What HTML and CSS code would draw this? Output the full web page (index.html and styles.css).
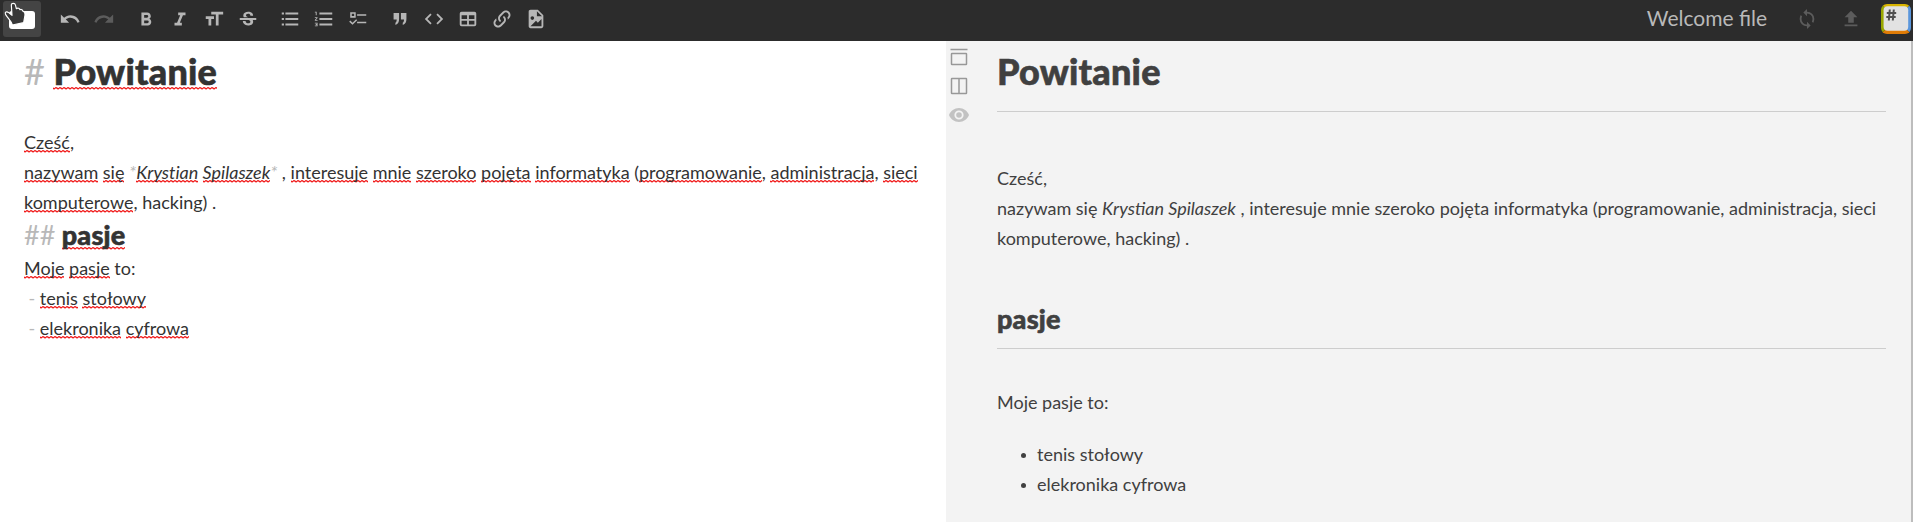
FILE: index.html
```html
<!DOCTYPE html>
<html lang="pl">
<head>
<meta charset="utf-8">
<title>Welcome file</title>
<link rel="stylesheet" href="styles.css">
</head>
<body>
<div class="app">
  <nav class="navbar">
    <div class="explorer">
      <span class="folder"></span>
      <svg class="pointer" width="28" height="28" viewBox="0 0 84 84"><path d="M34 14C34 9 45 9 46 14L49 26C54 23 58 25 60 29C64 27 68 30 69 34C74 34 75 39 75 45L71 68L37 75C34 62 24 56 17 44C13 36 20 33 26 38L36 46Z" fill="#383838" stroke="#fff" stroke-width="3.5" stroke-linejoin="round"/></svg>
    </div>
    <div class="tools">
      <div class="group">
        <svg class="icon" viewBox="0 0 24 24"><path d="M12.5,8C9.85,8 7.45,9 5.6,10.6L2,7V16H11L7.38,12.38C8.77,11.22 10.54,10.5 12.5,10.5C16.04,10.5 19.05,12.81 20.1,16L22.47,15.22C21.08,11.03 17.15,8 12.5,8Z"/></svg>
        <svg class="icon dim" viewBox="0 0 24 24"><path d="M18.4,10.6C16.55,9 14.15,8 11.5,8C6.85,8 2.92,11.03 1.54,15.22L3.9,16C4.95,12.81 7.95,10.5 11.5,10.5C13.45,10.5 15.23,11.22 16.62,12.38L13,16H22V7L18.4,10.6Z"/></svg>
      </div>
      <div class="group">
        <svg class="icon" viewBox="0 0 24 24"><path d="M13.5,15.5H10V12.5H13.5A1.5,1.5 0 0,1 15,14A1.5,1.5 0 0,1 13.5,15.5M10,6.5H13A1.5,1.5 0 0,1 14.5,8A1.5,1.5 0 0,1 13,9.5H10M15.6,10.79C16.57,10.11 17.25,9 17.25,8C17.25,5.74 15.5,4 13.25,4H7V18H14.04C16.14,18 17.75,16.3 17.75,14.21C17.75,12.69 16.89,11.39 15.6,10.79Z" transform="translate(0 1)"/></svg>
        <svg class="icon" viewBox="0 0 24 24"><path d="M10,4V7H12.21L8.79,15H6V18H14V15H11.79L15.21,7H18V4H10Z" transform="translate(0 1)"/></svg>
        <svg class="icon" viewBox="0 0 24 24"><path d="M3,12H6V19H9V12H12V9H3M9,4V7H14V19H17V7H22V4H9Z"/></svg>
        <svg class="icon" viewBox="0 0 24 24"><path d="M6.85,7.08C6.85,4.37,9.45,3,12.24,3c1.64,0,3,0.49,3.9,1.28c0.77,0.65,1.46,1.73,1.46,3.24h-3.01c0-0.31-0.05-0.59-0.15-0.85c-0.29-0.86-1.2-1.28-2.25-1.28c-1.86,0-2.34,1.02-2.34,1.7c0,0.48,0.25,0.88,0.74,1.21C10.97,8.55,11.36,8.78,12,9H7.39C7.18,8.66,6.85,8.11,6.85,7.08zM21,12v-2H3v2h9.62c1.15,0.45,1.96,0.75,1.96,1.97c0,1-0.81,1.67-2.28,1.67c-1.54,0-2.93-0.54-2.93-2.51H6.4c0,0.55,0.08,1.13,0.24,1.58c0.81,2.29,3.29,3.3,5.67,3.3c2.27,0,5.3-0.89,5.3-4.05c0-0.3-0.01-1.16-0.48-1.94H21z" transform="translate(0 1)"/></svg>
      </div>
      <div class="group">
        <svg class="icon" viewBox="0 0 24 24"><path d="M7,5H21V7H7V5M7,13V11H21V13H7M7,19V17H21V19H7M3,4.8H5.4V7.2H3ZM3,10.8H5.4V13.2H3ZM3,16.8H5.4V19.2H3Z"/></svg>
        <svg class="icon" viewBox="0 0 24 24"><path d="M7,13H21V11H7M7,19H21V17H7M7,7H21V5H7M2,11H3.8L2,13.1V14H5V13H3.2L5,10.9V10H2M3,8H4V4H2V5H3M2,17H4V17.5H3V18.5H4V19H2V20H5V16H2V17Z"/></svg>
        <svg class="icon" viewBox="0 0 24 24"><path d="M3.5,4.5H9.5V10.5H3.5ZM5.2,6.2V8.8H7.8V6.2ZM11,6.8H21V8.4H11ZM11,15H21V16.6H11ZM3.6,13.7L6,16L10,12.2L11.1,13.4L6,18.4L2.4,15Z" fill-rule="evenodd"/></svg>
      </div>
      <div class="group">
        <svg class="icon" viewBox="0 0 24 24"><path d="M5,5.5H11V12C11,15 10,17.5 7,18.5V16C8,15.3 8.4,14 8.4,12.5H5ZM13,5.5H19V12C19,15 18,17.5 15,18.5V16C16,15.3 16.4,14 16.4,12.5H13Z"/></svg>
        <svg class="icon" viewBox="0 0 24 24"><path d="M14.6,16.6L19.2,12L14.6,7.4L16,6L22,12L16,18L14.6,16.6M9.4,16.6L4.8,12L9.4,7.4L8,6L2,12L8,18L9.4,16.6Z"/></svg>
        <svg class="icon" viewBox="0 0 24 24"><path d="M5,4H19A2,2 0 0,1 21,6V18A2,2 0 0,1 19,20H5A2,2 0 0,1 3,18V6A2,2 0 0,1 5,4M5,8V12H11V8H5M13,8V12H19V8H13M5,14V18H11V14H5M13,14V18H19V14H13Z"/></svg>
        <svg class="icon" viewBox="0 0 24 24"><path d="M10.59,13.41C11,13.8 11,14.44 10.59,14.83C10.2,15.22 9.56,15.22 9.17,14.83C7.22,12.88 7.22,9.71 9.17,7.76V7.76L12.71,4.22C14.66,2.27 17.83,2.27 19.78,4.22C21.73,6.17 21.73,9.34 19.78,11.29L18.29,12.78C18.3,11.96 18.17,11.14 17.89,10.36L18.36,9.88C19.54,8.71 19.54,6.81 18.36,5.64C17.19,4.46 15.29,4.46 14.12,5.64L10.59,9.17C9.41,10.34 9.41,12.24 10.59,13.41M13.41,9.17C13.8,8.78 14.44,8.78 14.83,9.17C16.78,11.12 16.78,14.29 14.83,16.24V16.24L11.29,19.78C9.34,21.73 6.17,21.73 4.22,19.78C2.27,17.83 2.27,14.66 4.22,12.71L5.71,11.22C5.7,12.04 5.83,12.86 6.11,13.65L5.64,14.12C4.46,15.29 4.46,17.19 5.64,18.36C6.81,19.54 8.71,19.54 9.88,18.36L13.41,14.83C14.59,13.66 14.59,11.76 13.41,10.59C13,10.2 13,9.56 13.41,9.17Z"/></svg>
        <svg class="icon" viewBox="0 0 24 24"><path d="M13,9H18.5L13,3.5V9M6,2H14L20,8V20A2,2 0 0,1 18,22H6C4.89,22 4,21.1 4,20V4C4,2.89 4.89,2 6,2M6,20H15L18,20V12L14,16L12,14L6,20M8,9A2,2 0 0,0 6,11A2,2 0 0,0 8,13A2,2 0 0,0 10,11A2,2 0 0,0 8,9Z"/></svg>
      </div>
    </div>
    <div class="title">Welcome file</div>
    <div class="actions">
      <svg class="icon dim" viewBox="0 0 24 24"><path d="M12,18A6,6 0 0,1 6,12C6,11 6.25,10.03 6.7,9.2L5.24,7.74C4.46,8.97 4,10.43 4,12A8,8 0 0,0 12,20V23L16,19L12,15M12,4V1L8,5L12,9V6A6,6 0 0,1 18,12C18,13 17.75,13.97 17.3,14.8L18.76,16.26C19.54,15.03 20,13.57 20,12A8,8 0 0,0 12,4Z"/></svg>
      <svg class="icon dim" viewBox="0 0 24 24"><path d="M9,16V10H5L12,3L19,10H15V16H9M5,20V18H19V20H5Z"/></svg>
    </div>
    <svg class="logo" width="30" height="30" viewBox="0 0 30 30">
      <clipPath id="tile"><rect width="30" height="30" rx="6"/></clipPath>
      <g clip-path="url(#tile)">
        <path d="M0 0H30L15 15Z" fill="#d9b400"/>
        <path d="M30 0V30L15 15Z" fill="#5a96dc"/>
        <path d="M0 30H30L15 15Z" fill="#e07c06"/>
        <path d="M0 0V30L15 15Z" fill="#9aa800"/>
      </g>
      <rect x="2.6" y="2.2" width="24.6" height="24.6" rx="4" fill="#e2e2e2"/>
      <path d="M8.8 5.500L7.800 16.500M12.800 5.500L11.800 16.500M5.800 9H15.200M5.300 13H14.700" stroke="#505050" stroke-width="2" fill="none"/>
    </svg>
  </nav>
  <main class="panes">
    <section class="editor">
      <div class="ed-h1"><span class="mark">#</span> <span class="sp">Powitanie</span></div>
      <div class="blank"></div>
      <div><span class="sp">Cześć</span>,</div>
      <div><span class="sp">nazywam</span> <span class="sp">się</span> <em><span class="mark">*</span><span class="sp">Krystian</span> <span class="sp">Spilaszek</span><span class="mark">*</span></em> , <span class="sp">interesuje</span> <span class="sp">mnie</span> <span class="sp">szeroko</span> <span class="sp">pojęta</span> <span class="sp">informatyka</span> (<span class="sp">programowanie</span>, <span class="sp">administracja</span>, <span class="sp">sieci</span> <span class="sp">komputerowe</span>, hacking) .</div>
      <div class="ed-h2"><span class="mark">##</span> <span class="sp">pasje</span></div>
      <div><span class="sp">Moje</span> <span class="sp">pasje</span> to:</div>
      <div class="item"><span class="mark">-</span> <span class="sp">tenis</span> <span class="sp">stołowy</span></div>
      <div class="item"><span class="mark">-</span> <span class="sp">elekronika</span> <span class="sp">cyfrowa</span></div>
    </section>
    <aside class="side">
      <svg class="side-icon" viewBox="0 0 20 20"><path d="M1.500 1.500H18.500M3 5.500H17A.5.5 0 0 1 17.500 6V16A.5.5 0 0 1 17 16.500H3A.5.5 0 0 1 2.500 16V6A.5.5 0 0 1 3 5.500Z"/></svg>
      <svg class="side-icon" viewBox="0 0 20 20"><path d="M3 1.500H17A.5.5 0 0 1 17.500 2V16A.5.5 0 0 1 17 16.500H3A.5.5 0 0 1 2.500 16V2A.5.5 0 0 1 3 1.500ZM10 1.500V16.500"/></svg>
      <svg class="side-icon eye" viewBox="0 0 20 20"><path d="M0 9C1.500 5 5.400 2 10 2S18.500 5 20 9C18.500 13 14.600 16 10 16S1.500 13 0 9ZM10 4.400A4.600 4.600 0 1 0 10 13.600A4.600 4.600 0 1 0 10 4.400ZM10 6.200A2.800 2.800 0 1 1 10 11.800A2.800 2.800 0 1 1 10 6.200Z" fill-rule="evenodd"/></svg>
    </aside>
    <section class="preview">
      <h1>Powitanie</h1>
      <p>Cześć,<br>nazywam się <em>Krystian Spilaszek</em> , interesuje mnie szeroko pojęta informatyka (programowanie, administracja, sieci komputerowe, hacking) .</p>
      <h2>pasje</h2>
      <p>Moje pasje to:</p>
      <ul><li>tenis stołowy</li><li>elekronika cyfrowa</li></ul>
    </section>
    <div class="edge"></div>
  </main>
</div>
</body>
</html>
```
FILE: styles.css
```css
* { box-sizing: border-box; }
body { margin: 0; font-family: Lato, "Liberation Sans", sans-serif; font-size: 18px; line-height: 30px; }
.app { width: 1913px; height: 522px; display: flex; flex-direction: column; overflow: hidden; }

.navbar { flex: none; height: 41px; display: flex; align-items: flex-start; background: #2c2c2c; padding: 1px 2px 0 3px; }
.explorer { position: relative; width: 38px; height: 36px; background: #444; border-radius: 3px; padding: 10px 0 0 6px; }
.folder { display: block; width: 26px; height: 18px; background: #fff; border-radius: 3px; }
.pointer { position: absolute; left: -3px; top: -1px; }
.tools { display: flex; gap: 8px; margin-left: 12px; }
.group { display: flex; }
.icon { width: 34px; height: 36px; padding: 7px 6px; fill: #b6b6b6; }
.icon.dim { fill: #5c5c5c; }
.title { margin-left: auto; font-size: 21px; line-height: 34px; color: #b9b9b9; }
.actions { display: flex; gap: 10px; margin-left: 23px; }
.logo { margin: 3px 0 0 13px; }

.panes { flex: 1; display: flex; min-height: 0; }
.editor { width: 946px; padding: 6px 24px; background: #fff; color: #333; font-variant-ligatures: no-common-ligatures; }
.ed-h1 .sp, .ed-h2 .sp, .preview h1, .preview h2 { font-weight: 900; letter-spacing: .2px; -webkit-text-stroke: .6px currentColor; }
.ed-h1, .ed-h2 { font-weight: 900; }
.ed-h1 { font-size: 36px; line-height: 48px; }
.ed-h2 { font-size: 27px; line-height: 36px; }
.blank { height: 32px; }
.item { padding-left: 4.5px; }
.mark { color: #b8b8b8; font-weight: 400; }
.sp { background: url("data:image/svg+xml,%3Csvg xmlns='http://www.w3.org/2000/svg' width='4' height='3'%3E%3Cpath d='M-1 .2L1 2L3 .5L5 2' fill='none' stroke='%23f01010' stroke-width='1.1'/%3E%3C/svg%3E") 0 calc(.987em + 1px) repeat-x; }
.ed-h1 .sp, .ed-h2 .sp { background-position-y: calc(.987em + 2px); }

.side { width: 26px; background: #f3f3f3; padding: 7px 0 0 3px; display: flex; flex-direction: column; gap: 9px; }
.side-icon { width: 20px; height: 20px; fill: none; stroke: #989898; stroke-width: 1.5; }
.side-icon.eye { fill: #c2c2c2; stroke: none; }

.preview { width: 939px; background: #f3f3f3; color: #404040; padding: 6px 25px 0; }
.preview h1, .preview h2 { margin: 0; border-bottom: 1px solid #cdcdcd; }
.preview h1 { font-size: 36px; line-height: 48px; height: 65px; margin-bottom: 51px; }
.preview h2 { font-size: 27px; line-height: 36px; height: 48px; margin: 48px 0 38px; }
.preview p { margin: 0; }
.preview ul { margin: 22px 0 0; padding-left: 24px; list-style: none; }
.preview li { display: flex; gap: 11px; }
.preview li::before { content: ""; width: 5px; height: 5px; margin-top: 14px; border-radius: 50%; background: #404040; }
.edge { width: 2px; background: #bdbdbd; }
```
